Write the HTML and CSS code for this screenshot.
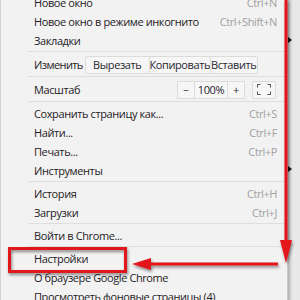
FILE: index.html
```html
<!DOCTYPE html>
<html>
<head>
  <meta charset="utf-8">
  <title>Меню Chrome</title>
  <link rel="stylesheet" href="styles.css">
</head>
<body>
  <div class="screen">
    <div class="menu">
      <div class="item"><span>Новое окно</span><span class="key">Ctrl+N</span></div>
      <div class="item"><span>Новое окно в режиме инкогнито</span><span class="key">Ctrl+Shift+N</span></div>
      <div class="item"><span>Закладки</span></div>
      <div class="sep"></div>
      <div class="item tools-row">
        <span class="label">Изменить</span>
        <div class="btn-group">
          <span class="btn cut">Вырезать</span>
          <span class="btn copy">Копировать</span>
          <span class="btn paste">Вставить</span>
        </div>
      </div>
      <div class="sep"></div>
      <div class="item tools-row">
        <span>Масштаб</span>
        <div class="zoom-box">
          <div class="btn-group">
            <span class="btn minus">&minus;</span>
            <span class="btn level">100%</span>
            <span class="btn plus">+</span>
          </div>
          <span class="btn full">
            <svg width="14" height="11" viewBox="0 0 14 11">
              <path d="M0.5 3.5V0.5H3.5M10.5 0.5H13.5V3.5M13.5 7.5V10.5H10.5M3.5 10.5H0.5V7.5" fill="none" stroke="#555" stroke-width="1"/>
            </svg>
          </span>
        </div>
      </div>
      <div class="sep"></div>
      <div class="item"><span>Сохранить страницу как...</span><span class="key">Ctrl+S</span></div>
      <div class="item"><span>Найти...</span><span class="key">Ctrl+F</span></div>
      <div class="item"><span>Печать...</span><span class="key">Ctrl+P</span></div>
      <div class="item"><span>Инструменты</span></div>
      <div class="sep"></div>
      <div class="item"><span>История</span><span class="key">Ctrl+H</span></div>
      <div class="item"><span>Загрузки</span><span class="key">Ctrl+J</span></div>
      <div class="sep"></div>
      <div class="item"><span>Войти в Chrome...</span></div>
      <div class="sep"></div>
      <div class="item"><span>Настройки</span></div>
      <div class="item"><span>О браузере Google Chrome</span></div>
      <div class="item"><span>Просмотреть фоновые страницы (4)</span></div>
    </div>

    <!-- submenu arrows peeking out at the right edge -->
    <span class="sub-arrow bookmarks-arrow"></span>
    <span class="sub-arrow tools-arrow"></span>

    <!-- red annotation drawn over the screenshot -->
    <svg class="marks" width="300" height="300" viewBox="0 0 300 300">
      <defs>
        <filter id="shade" x="-20%" y="-20%" width="140%" height="140%">
          <feDropShadow dx="1" dy="2" stdDeviation="1.5" flood-color="#000" flood-opacity="0.45"/>
        </filter>
      </defs>
      <g filter="url(#shade)" fill="#e3141b" stroke="#e3141b">
        <rect x="9.5" y="248.5" width="116" height="23" fill="none" stroke-width="3"/>
        <line x1="286" y1="0" x2="286" y2="243" stroke-width="3"/>
        <polygon points="280,240 292,240 286,263" stroke="none"/>
        <line x1="278" y1="264" x2="146" y2="264" stroke-width="3"/>
        <polygon points="151,258 151,270 132,264" stroke="none"/>
      </g>
    </svg>
  </div>
</body>
</html>
```

FILE: styles.css
```css
body {
  margin: 0;
  background-color: #e8e8e8;
  font-family: "Open Sans", "Noto Sans", sans-serif;
  font-size: 11px;
  letter-spacing: -0.4px;
  color: #1f1b24;
}

.screen {
  position: relative;
  width: 300px;
  height: 300px;
  overflow: hidden;
}

.menu {
  width: 288px;
  margin-top: -7px;
  background-color: #f2f2f2;
  border-left: 1px solid #d4d4d4;
  border-right: 1px solid #c8c8c8;
  box-shadow: 2px 0 3px rgba(0, 0, 0, 0.25);
  box-sizing: border-box;
  padding-left: 2px;
}

.item {
  display: flex;
  align-items: center;
  justify-content: space-between;
  height: 19px;
  padding: 0 10px 0 31px;
  white-space: nowrap;
}

.key {
  color: #a0a0a0;
}

.sep {
  height: 1px;
  margin: 1px 0 2px 25px;
  background-color: #dedede;
}

.tools-row {
  height: 21px;
}

.label {
  flex-shrink: 0;
  margin-right: 2px;
  letter-spacing: -0.6px;
}

.tools-row .btn-group {
  margin-right: auto;
}

.zoom-box .btn-group {
  margin-right: 0;
}

.btn-group {
  display: flex;
}

.btn {
  display: flex;
  align-items: center;
  justify-content: center;
  flex-shrink: 0;
  height: 18px;
  box-sizing: border-box;
  border: 1px solid #dcdcdc;
  background-color: #f6f6f6;
  color: #2a2630;
}

.btn + .btn {
  margin-left: -1px;
}

.cut {
  width: 65px;
  border-radius: 2px 0 0 2px;
}

.copy {
  width: 62px;
}

.paste {
  width: 48px;
  border-radius: 0 2px 2px 0;
}

.zoom-box {
  display: flex;
  gap: 7px;
  margin-right: 1px;
}

.minus {
  width: 18px;
  font-size: 10px;
}

.level {
  width: 34px;
}

.plus {
  width: 18px;
}

.full {
  width: 24px;
  border-radius: 2px;
}

.sub-arrow {
  position: absolute;
  left: 288px;
  width: 0;
  height: 0;
  border-top: 3px solid transparent;
  border-bottom: 3px solid transparent;
  border-left: 4px solid #111;
}

.bookmarks-arrow {
  top: 37px;
}

.tools-arrow {
  top: 166px;
}

.marks {
  position: absolute;
  top: 0;
  left: 0;
}
```
